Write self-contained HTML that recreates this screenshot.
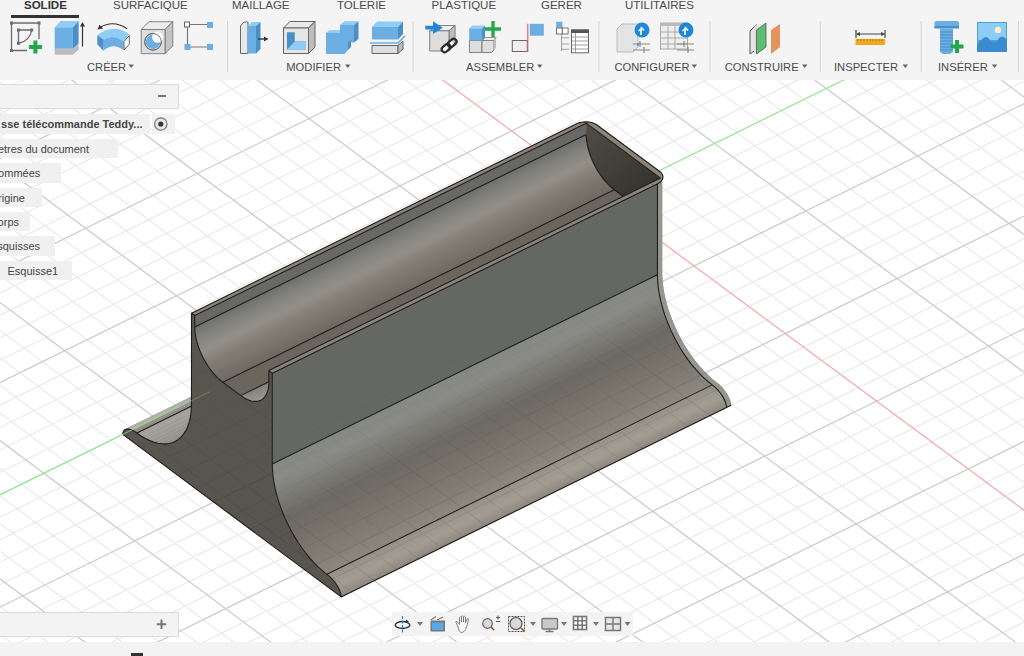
<!DOCTYPE html><html><head><meta charset="utf-8"><style>
*{margin:0;padding:0;box-sizing:border-box}
body{width:1024px;height:656px;overflow:hidden;background:#fff;font-family:"Liberation Sans", sans-serif;position:relative}
.a{position:absolute;white-space:nowrap}
.tab{font-size:11.5px;color:#4a4a4a;top:-1px;line-height:13px}
.grp{font-size:11.2px;color:#4a4a4a;top:60.5px;line-height:13px}
.it2{font-size:11px;color:#444;line-height:19px}
</style></head><body><svg class="a" style="left:0;top:0" width="1024" height="656" viewBox="0 0 1024 656"><path d="M-501.7 315.5L636.5 -243.8M-483.6 329.0L654.7 -230.4M-465.5 342.5L672.9 -216.9M-447.4 355.9L691.1 -203.5M-411.2 382.9L727.5 -176.7M-393.1 396.4L745.7 -163.2M-375.0 409.9L763.9 -149.8M-356.9 423.4L782.1 -136.4M-320.7 450.5L818.6 -109.5M-302.6 464.0L836.8 -96.0M-284.5 477.5L855.0 -82.6M-266.4 491.0L873.3 -69.1M-230.1 518.1L909.8 -42.2M-212.0 531.6L928.0 -28.8M-193.8 545.1L946.3 -15.3M-175.7 558.7L964.5 -1.8M-139.4 585.7L1001.1 25.1M-121.2 599.3L1019.3 38.6M-103.1 612.8L1037.6 52.1M-84.9 626.4L1055.9 65.5M-48.6 653.5L1092.5 92.5M-30.4 667.0L1110.8 106.0M-12.2 680.6L1129.0 119.5M6.0 694.2L1147.3 133.0M42.4 721.3L1184.0 160.0M60.5 734.9L1202.3 173.5M78.7 748.5L1220.6 187.0M97.0 762.0L1238.9 200.5M133.4 789.2L1275.5 227.6M151.6 802.8L1293.9 241.1M169.8 816.4L1312.2 254.6M188.0 830.0L1330.6 268.1M224.5 857.2L1367.2 295.2M242.7 870.8L1385.6 308.7M261.0 884.4L1403.9 322.3M279.2 898.0L1422.3 335.8M315.7 925.2L1459.0 362.9M334.0 938.8L1477.4 376.4M352.2 952.5L1495.8 390.0M370.5 966.1L1514.2 403.5M407.0 993.3L1550.9 430.7M-519.7 302.0L407.0 993.3M-497.4 291.0L429.5 982.3M-475.1 280.1L451.9 971.3M-452.8 269.1L474.3 960.2M-408.1 247.1L519.2 938.2M-385.8 236.2L541.7 927.1M-363.5 225.2L564.1 916.1M-341.1 214.2L586.5 905.0M-296.5 192.3L631.4 883.0M-274.2 181.3L653.8 871.9M-251.9 170.4L676.3 860.9M-229.5 159.4L698.7 849.9M-184.9 137.5L743.6 827.8M-162.6 126.5L766.0 816.8M-140.3 115.5L788.5 805.7M-117.9 104.6L810.9 794.7M-73.3 82.6L855.8 772.6M-51.0 71.7L878.2 761.6M-28.7 60.7L900.6 750.5M-6.4 49.7L923.0 739.5M38.3 27.8L967.9 717.4M60.6 16.8L990.3 706.4M82.9 5.9L1012.8 695.4M105.2 -5.1L1035.2 684.3M149.8 -27.0L1080.1 662.3M172.2 -38.0L1102.5 651.3M194.5 -48.9L1124.9 640.2M216.8 -59.9L1147.3 629.2M261.4 -81.8L1192.2 607.1M283.7 -92.8L1214.6 596.1M306.0 -103.8L1237.0 585.1M328.3 -114.7L1259.5 574.0M372.9 -136.6L1304.3 552.0M395.3 -147.6L1326.7 540.9M417.6 -158.6L1349.2 529.9M439.9 -169.5L1371.6 518.9M484.5 -191.4L1416.4 496.8M506.8 -202.4L1438.8 485.8M529.1 -213.4L1461.3 474.8M551.4 -224.3L1483.7 463.7M596.0 -246.2L1528.5 441.7M618.3 -257.2L1550.9 430.7" stroke="#eaeaea" stroke-width="1.2" fill="none"/><path d="M-519.7 302.0L618.3 -257.2M-429.3 369.4L709.3 -190.1M-338.8 436.9L800.4 -122.9M-248.2 504.5L891.5 -55.7M-66.7 639.9L1074.2 79.0M24.2 707.7L1165.6 146.5M115.2 775.6L1257.2 214.0M206.3 843.6L1348.9 281.7M297.5 911.6L1440.7 349.3M388.7 979.7L1532.5 417.1M-430.4 258.1L496.8 949.2M-318.8 203.3L609.0 894.0M-207.2 148.4L721.2 838.8M-95.6 93.6L833.3 783.7M16.0 38.8L945.5 728.5M127.5 -16.0L1057.6 673.3M350.6 -125.7L1281.9 563.0M462.2 -180.5L1394.0 507.9M573.7 -235.3L1506.1 452.7" stroke="#cdcdcd" stroke-width="1.3" fill="none"/><path d="M239.1 -70.9L1169.8 618.2" stroke="#f4a8a8" stroke-width="1.2" fill="none"/><path d="M-157.5 572.2L982.8 11.6" stroke="#8ee48e" stroke-width="1.1" fill="none"/><defs>
<linearGradient id="gEnd" gradientUnits="userSpaceOnUse" x1="590" y1="130" x2="640" y2="190">
<stop offset="0" stop-color="#4e4a44"/><stop offset="1" stop-color="#383530"/></linearGradient>
</defs><linearGradient id="mgE" gradientUnits="userSpaceOnUse" x1="0" y1="515.6" x2="0" y2="343.2"><stop offset="0" stop-color="#fff"/><stop offset="1" stop-color="#222"/></linearGradient><linearGradient id="mgF" gradientUnits="userSpaceOnUse" x1="569.7" y1="484.5" x2="467.7" y2="277.1"><stop offset="0" stop-color="#fff"/><stop offset="0.45" stop-color="#999"/><stop offset="0.6" stop-color="#444"/><stop offset="1" stop-color="#000"/></linearGradient><mask id="mGrid" maskUnits="userSpaceOnUse" x="0" y="0" width="1024" height="656"><path d="M191.48 313.15L191.48 404.00L191.31 409.34L190.81 414.38L189.98 419.12L188.81 423.51L187.33 427.53L185.53 431.15L183.44 434.36L181.06 437.13L178.41 439.45L175.50 441.29L172.35 442.66L168.99 443.54L165.43 443.92L161.69 443.81L157.80 443.20L153.78 442.10L149.66 440.51L145.46 438.46L141.20 435.93L136.92 432.96L136.92 432.96L134.16 431.14L131.50 429.84L129.04 429.13L126.90 429.02L125.13 429.53L123.82 430.63L123.01 432.28L122.74 434.42L341.16 596.90L340.89 594.36L340.08 591.50L338.77 588.45L337.00 585.31L334.85 582.21L332.39 579.27L329.72 576.61L326.95 574.31L326.95 574.31L322.66 570.91L318.40 567.09L314.19 562.90L310.06 558.34L306.03 553.46L302.13 548.27L298.39 542.81L294.82 537.13L291.45 531.24L288.30 525.18L285.39 519.01L282.73 512.74L280.35 506.43L278.25 500.10L276.46 493.80L274.97 487.57L273.81 481.45L272.97 475.47L272.47 469.67L272.30 464.08L272.30 373.18L268.84 370.61L268.84 381.92L268.75 384.57L268.49 387.07L268.06 389.41L267.47 391.58L266.70 393.56L265.78 395.33L264.71 396.90L263.48 398.25L262.12 399.36L260.63 400.24L259.01 400.88L257.28 401.28L255.45 401.42L253.53 401.32L251.53 400.97L249.46 400.37L247.35 399.54L245.19 398.46L243.00 397.15L240.80 395.63L222.78 382.23L220.58 380.49L218.40 378.55L216.24 376.42L214.12 374.11L212.06 371.64L210.06 369.02L208.14 366.26L206.31 363.40L204.58 360.44L202.96 357.40L201.47 354.30L200.11 351.15L198.89 347.99L197.81 344.83L196.89 341.68L196.13 338.57L195.53 335.52L195.10 332.54L194.84 329.66L194.76 326.89L194.76 326.89L194.76 315.58Z" fill="url(#mgE)"/><path d="M272.30 373.18L272.30 464.08L272.47 469.67L272.97 475.47L273.81 481.45L274.97 487.57L276.46 493.80L278.25 500.10L280.35 506.43L282.73 512.74L285.39 519.01L288.30 525.18L291.45 531.24L294.82 537.13L298.39 542.81L302.13 548.27L306.03 553.46L310.06 558.34L314.19 562.90L318.40 567.09L322.66 570.91L326.95 574.31L326.95 574.31L329.72 576.61L332.39 579.27L334.85 582.21L337.00 585.31L338.77 588.45L340.08 591.50L340.89 594.36L341.16 596.90L731.17 405.14L730.90 402.59L730.09 399.74L728.77 396.68L727.00 393.55L724.84 390.46L722.38 387.52L719.71 384.86L716.93 382.57L716.93 382.57L712.63 379.17L708.36 375.36L704.14 371.17L700.00 366.62L695.96 361.74L692.06 356.56L688.31 351.11L684.73 345.42L681.35 339.54L678.20 333.49L675.28 327.32L672.62 321.06L670.23 314.75L668.13 308.42L666.33 302.13L664.84 295.90L663.67 289.78L662.83 283.80L662.33 278.01L662.16 272.42L662.16 181.54Z" fill="url(#mgF)"/><path d="M657.46 183.85L657.46 274.73L657.63 280.32L658.13 286.11L658.97 292.09L660.14 298.21L661.63 304.44L663.43 310.73L665.53 317.06L667.92 323.37L670.58 329.63L673.50 335.80L676.65 341.85L680.03 347.73L683.61 353.42L687.36 358.87L691.26 364.05L695.30 368.93L699.44 373.48L703.66 377.67L707.93 381.48L712.23 384.88L712.23 384.88L715.01 387.17L717.68 389.83L720.14 392.77L722.30 395.86L724.07 399.00L725.39 402.05L726.20 404.90L726.47 407.45L731.17 405.14L730.90 402.59L730.09 399.74L728.77 396.68L727.00 393.55L724.84 390.46L722.38 387.52L719.71 384.86L716.93 382.57L716.93 382.57L712.63 379.17L708.36 375.36L704.14 371.17L700.00 366.62L695.96 361.74L692.06 356.56L688.31 351.11L684.73 345.42L681.35 339.54L678.20 333.49L675.28 327.32L672.62 321.06L670.23 314.75L668.13 308.42L666.33 302.13L664.84 295.90L663.67 289.78L662.83 283.80L662.33 278.01L662.16 272.42L662.16 181.54Z" fill="url(#mgF)"/></mask><clipPath id="cpL"><rect x="0" y="0" width="191.6" height="656"/></clipPath><clipPath id="cpM"><path d="M191.48 313.15L576.69 123.80L579.05 122.86L581.67 122.21L584.44 121.89L587.27 121.89L590.04 122.23L592.65 122.89L595.00 123.84L596.99 125.05L659.75 171.48L661.31 172.91L662.39 174.49L662.93 176.16L662.92 177.87L662.36 179.54L661.27 181.12L659.69 182.53L657.68 183.74L272.30 373.18ZM191.48 313.15L191.48 404.00L191.31 409.34L190.81 414.38L189.98 419.12L188.81 423.51L187.33 427.53L185.53 431.15L183.44 434.36L181.06 437.13L178.41 439.45L175.50 441.29L172.35 442.66L168.99 443.54L165.43 443.92L161.69 443.81L157.80 443.20L153.78 442.10L149.66 440.51L145.46 438.46L141.20 435.93L136.92 432.96L136.92 432.96L134.16 431.14L131.50 429.84L129.04 429.13L126.90 429.02L125.13 429.53L123.82 430.63L123.01 432.28L122.74 434.42L341.16 596.90L340.89 594.36L340.08 591.50L338.77 588.45L337.00 585.31L334.85 582.21L332.39 579.27L329.72 576.61L326.95 574.31L326.95 574.31L322.66 570.91L318.40 567.09L314.19 562.90L310.06 558.34L306.03 553.46L302.13 548.27L298.39 542.81L294.82 537.13L291.45 531.24L288.30 525.18L285.39 519.01L282.73 512.74L280.35 506.43L278.25 500.10L276.46 493.80L274.97 487.57L273.81 481.45L272.97 475.47L272.47 469.67L272.30 464.08L272.30 373.18L268.84 370.61L268.84 381.92L268.75 384.57L268.49 387.07L268.06 389.41L267.47 391.58L266.70 393.56L265.78 395.33L264.71 396.90L263.48 398.25L262.12 399.36L260.63 400.24L259.01 400.88L257.28 401.28L255.45 401.42L253.53 401.32L251.53 400.97L249.46 400.37L247.35 399.54L245.19 398.46L243.00 397.15L240.80 395.63L222.78 382.23L220.58 380.49L218.40 378.55L216.24 376.42L214.12 374.11L212.06 371.64L210.06 369.02L208.14 366.26L206.31 363.40L204.58 360.44L202.96 357.40L201.47 354.30L200.11 351.15L198.89 347.99L197.81 344.83L196.89 341.68L196.13 338.57L195.53 335.52L195.10 332.54L194.84 329.66L194.76 326.89L194.76 326.89L194.76 315.58ZM272.30 373.18L272.30 464.08L272.30 464.08L272.47 469.67L272.97 475.47L273.81 481.45L274.97 487.57L276.46 493.80L278.25 500.10L280.35 506.43L282.73 512.74L285.39 519.01L288.30 525.18L291.45 531.24L294.82 537.13L298.39 542.81L302.13 548.27L306.03 553.46L310.06 558.34L314.19 562.90L318.40 567.09L322.66 570.91L326.95 574.31L326.95 574.31L329.72 576.61L332.39 579.27L334.85 582.21L337.00 585.31L338.77 588.45L340.08 591.50L340.89 594.36L341.16 596.90L731.17 405.14L730.90 402.59L730.09 399.74L728.77 396.68L727.00 393.55L724.84 390.46L722.38 387.52L719.71 384.86L716.93 382.57L716.93 382.57L712.63 379.17L708.36 375.36L704.14 371.17L700.00 366.62L695.96 361.74L692.06 356.56L688.31 351.11L684.73 345.42L681.35 339.54L678.20 333.49L675.28 327.32L672.62 321.06L670.23 314.75L668.13 308.42L666.33 302.13L664.84 295.90L663.67 289.78L662.83 283.80L662.33 278.01L662.16 272.42L662.16 272.42L662.16 181.54Z"/></clipPath><g clip-path="url(#cpL)"><path d="M136.92 432.96L134.16 431.14L530.42 236.34L533.20 238.17Z" fill="#8f8b83" stroke="#8f8b83" stroke-width="0.5"/><path d="M134.16 431.14L131.50 429.84L527.76 235.05L530.42 236.34Z" fill="#949189" stroke="#949189" stroke-width="0.5"/><path d="M131.50 429.84L129.04 429.13L525.30 234.34L527.76 235.05Z" fill="#9a978f" stroke="#9a978f" stroke-width="0.5"/><path d="M129.04 429.13L126.90 429.02L523.15 234.24L525.30 234.34Z" fill="#a09d95" stroke="#a09d95" stroke-width="0.5"/><path d="M126.90 429.02L125.13 429.53L521.38 234.74L523.15 234.24Z" fill="#a5a29c" stroke="#a5a29c" stroke-width="0.5"/><path d="M125.13 429.53L123.82 430.63L520.07 235.85L521.38 234.74Z" fill="#aba8a2" stroke="#aba8a2" stroke-width="0.5"/><path d="M123.82 430.63L123.01 432.28L519.26 237.50L520.07 235.85Z" fill="#b1aea8" stroke="#b1aea8" stroke-width="0.5"/><path d="M123.01 432.28L122.74 434.42L518.99 239.64L519.26 237.50Z" fill="#b6b4ae" stroke="#b6b4ae" stroke-width="0.5"/><path d="M191.48 404.00L191.31 409.34L587.71 214.48L587.88 209.15Z" fill="#6a6862" stroke="#6a6862" stroke-width="0.5"/><path d="M191.31 409.34L190.81 414.38L587.20 219.53L587.71 214.48Z" fill="#6e6b65" stroke="#6e6b65" stroke-width="0.5"/><path d="M190.81 414.38L189.98 419.12L586.37 224.26L587.20 219.53Z" fill="#706e68" stroke="#706e68" stroke-width="0.5"/><path d="M189.98 419.12L188.81 423.51L585.20 228.65L586.37 224.26Z" fill="#74716b" stroke="#74716b" stroke-width="0.5"/><path d="M188.81 423.51L187.33 427.53L583.71 232.67L585.20 228.65Z" fill="#76746e" stroke="#76746e" stroke-width="0.5"/><path d="M187.33 427.53L185.53 431.15L581.92 236.30L583.71 232.67Z" fill="#7a7771" stroke="#7a7771" stroke-width="0.5"/><path d="M185.53 431.15L183.44 434.36L579.82 239.51L581.92 236.30Z" fill="#7c7a74" stroke="#7c7a74" stroke-width="0.5"/><path d="M183.44 434.36L181.06 437.13L577.43 242.28L579.82 239.51Z" fill="#807d77" stroke="#807d77" stroke-width="0.5"/><path d="M181.06 437.13L178.41 439.45L574.77 244.60L577.43 242.28Z" fill="#82807a" stroke="#82807a" stroke-width="0.5"/><path d="M178.41 439.45L175.50 441.29L571.86 246.45L574.77 244.60Z" fill="#86837d" stroke="#86837d" stroke-width="0.5"/><path d="M175.50 441.29L172.35 442.66L568.71 247.82L571.86 246.45Z" fill="#888680" stroke="#888680" stroke-width="0.5"/><path d="M172.35 442.66L168.99 443.54L565.33 248.70L568.71 247.82Z" fill="#8c8983" stroke="#8c8983" stroke-width="0.5"/><path d="M168.99 443.54L165.43 443.92L561.76 249.09L565.33 248.70Z" fill="#8e8c86" stroke="#8e8c86" stroke-width="0.5"/><path d="M165.43 443.92L161.69 443.81L558.02 248.98L561.76 249.09Z" fill="#928f89" stroke="#928f89" stroke-width="0.5"/><path d="M161.69 443.81L157.80 443.20L554.12 248.37L558.02 248.98Z" fill="#94928c" stroke="#94928c" stroke-width="0.5"/><path d="M157.80 443.20L153.78 442.10L550.09 247.28L554.12 248.37Z" fill="#98958f" stroke="#98958f" stroke-width="0.5"/><path d="M153.78 442.10L149.66 440.51L545.96 245.70L550.09 247.28Z" fill="#9a9892" stroke="#9a9892" stroke-width="0.5"/><path d="M149.66 440.51L145.46 438.46L541.75 243.65L545.96 245.70Z" fill="#9e9b95" stroke="#9e9b95" stroke-width="0.5"/><path d="M145.46 438.46L141.20 435.93L537.49 241.13L541.75 243.65Z" fill="#a09e98" stroke="#a09e98" stroke-width="0.5"/><path d="M141.20 435.93L136.92 432.96L533.20 238.17L537.49 241.13Z" fill="#a4a19b" stroke="#a4a19b" stroke-width="0.5"/></g><path d="M191.48 313.15L576.69 123.80L579.05 122.86L581.67 122.21L584.44 121.89L587.27 121.89L590.04 122.23L592.65 122.89L595.00 123.84L596.99 125.05L659.75 171.48L661.31 172.91L662.39 174.49L662.93 176.16L662.92 177.87L662.36 179.54L661.27 181.12L659.69 182.53L657.68 183.74L272.30 373.18Z" fill="#8b8477"/><path d="M194.76 315.58L586.24 123.15L586.24 134.46L194.76 326.89Z" fill="#686965" stroke="#686965" stroke-width="0.6"/><linearGradient id="sg1" gradientUnits="userSpaceOnUse" x1="387.37" y1="232.21" x2="414.74" y2="287.88"><stop offset="0.0000" stop-color="#6a6c68"/><stop offset="0.0000" stop-color="#6e706c"/><stop offset="0.0407" stop-color="#737470"/><stop offset="0.0843" stop-color="#777874"/><stop offset="0.1304" stop-color="#7c7c78"/><stop offset="0.1788" stop-color="#80807c"/><stop offset="0.2292" stop-color="#85847f"/><stop offset="0.2813" stop-color="#898882"/><stop offset="0.3347" stop-color="#8d8b84"/><stop offset="0.3891" stop-color="#918e87"/><stop offset="0.4443" stop-color="#918d85"/><stop offset="0.4997" stop-color="#8c8880"/><stop offset="0.5552" stop-color="#87837b"/><stop offset="0.6104" stop-color="#837e76"/><stop offset="0.6648" stop-color="#7f7a72"/><stop offset="0.7183" stop-color="#7d7870"/><stop offset="0.7704" stop-color="#7a756d"/><stop offset="0.8209" stop-color="#78726a"/><stop offset="0.8693" stop-color="#757068"/><stop offset="0.9155" stop-color="#736d65"/><stop offset="0.9592" stop-color="#706b63"/><stop offset="1.0000" stop-color="#6e6860"/></linearGradient><path d="M194.76 326.89L194.76 326.89L194.84 329.66L195.10 332.54L195.53 335.52L196.13 338.57L196.89 341.68L197.81 344.83L198.89 347.99L200.11 351.15L201.47 354.30L202.96 357.40L204.58 360.44L206.31 363.40L208.14 366.26L210.06 369.02L212.06 371.64L214.12 374.11L216.24 376.42L218.40 378.55L220.58 380.49L222.78 382.23L614.32 189.76L612.12 188.03L609.93 186.09L607.77 183.96L605.64 181.65L603.57 179.18L601.57 176.56L599.65 173.81L597.81 170.95L596.08 167.99L594.46 164.95L592.97 161.86L591.60 158.72L590.38 155.56L589.30 152.39L588.38 149.25L587.61 146.14L587.01 143.09L586.58 140.11L586.33 137.23L586.24 134.46L586.24 134.46Z" fill="url(#sg1)"/><path d="M222.78 382.23L240.80 395.63L632.38 203.13L614.32 189.76Z" fill="#6a655d"/><linearGradient id="sg2" gradientUnits="userSpaceOnUse" x1="450.72" y1="292.44" x2="456.40" y2="304.00"><stop offset="0.0000" stop-color="#807c74"/><stop offset="0.0057" stop-color="#8c8a84"/><stop offset="0.1817" stop-color="#837f77"/><stop offset="0.1869" stop-color="#8f8d87"/><stop offset="0.3474" stop-color="#86827a"/><stop offset="0.3522" stop-color="#92908a"/><stop offset="0.4962" stop-color="#89867e"/><stop offset="0.5004" stop-color="#95938d"/><stop offset="0.6271" stop-color="#8c8981"/><stop offset="0.6308" stop-color="#989690"/><stop offset="0.7393" stop-color="#8f8c84"/><stop offset="0.7424" stop-color="#9c9992"/><stop offset="0.8321" stop-color="#928f88"/><stop offset="0.8346" stop-color="#9f9c95"/><stop offset="0.9050" stop-color="#96928b"/><stop offset="0.9069" stop-color="#a29f98"/><stop offset="0.9574" stop-color="#99958e"/><stop offset="0.9587" stop-color="#a5a29b"/><stop offset="0.9892" stop-color="#9c9891"/><stop offset="0.9898" stop-color="#a29f98"/><stop offset="1.0000" stop-color="#9f9c94"/></linearGradient><path d="M240.80 395.63L243.00 397.15L245.19 398.46L247.35 399.54L249.46 400.37L251.53 400.97L253.53 401.32L255.45 401.42L257.28 401.28L259.01 400.88L260.63 400.24L262.12 399.36L263.48 398.25L264.71 396.90L265.78 395.33L266.70 393.56L267.47 391.58L268.06 389.41L268.49 387.07L268.75 384.57L268.84 381.92L660.48 189.40L660.39 192.05L660.14 194.55L659.70 196.89L659.11 199.05L658.34 201.03L657.42 202.81L656.34 204.38L655.11 205.73L653.75 206.84L652.25 207.73L650.63 208.37L648.90 208.76L647.06 208.91L645.14 208.81L643.13 208.46L641.06 207.87L638.94 207.03L636.78 205.96L634.59 204.66L632.38 203.13Z" fill="url(#sg2)"/><path d="M586.24 123.15L586.24 134.46L586.24 134.46L586.33 137.23L586.58 140.11L587.01 143.09L587.61 146.14L588.38 149.25L589.30 152.39L590.38 155.56L591.60 158.72L592.97 161.86L594.46 164.95L596.08 167.99L597.81 170.95L599.65 173.81L601.57 176.56L603.57 179.18L605.64 181.65L607.77 183.96L609.93 186.09L612.12 188.03L614.32 189.76L632.38 203.13L634.59 204.66L636.78 205.96L638.94 207.03L641.06 207.87L643.13 208.46L645.14 208.81L647.06 208.91L648.90 208.76L650.63 208.37L652.25 207.73L653.75 206.84L655.11 205.73L656.34 204.38L657.42 202.81L658.34 201.03L659.11 199.05L659.70 196.89L660.14 194.55L660.39 192.05L660.48 189.40L660.48 178.09Z" fill="url(#gEnd)"/><path d="M194.76 326.89L586.24 134.46M222.78 382.23L614.32 189.76M240.80 395.63L632.38 203.13M586.24 134.46L586.24 134.46L586.33 137.23L586.58 140.11L587.01 143.09L587.61 146.14L588.38 149.25L589.30 152.39L590.38 155.56L591.60 158.72L592.97 161.86L594.46 164.95L596.08 167.99L597.81 170.95L599.65 173.81L601.57 176.56L603.57 179.18L605.64 181.65L607.77 183.96L609.93 186.09L612.12 188.03L614.32 189.76L632.38 203.13L634.59 204.66L636.78 205.96L638.94 207.03L641.06 207.87L643.13 208.46L645.14 208.81L647.06 208.91L648.90 208.76L650.63 208.37L652.25 207.73L653.75 206.84L655.11 205.73L656.34 204.38L657.42 202.81L658.34 201.03L659.11 199.05L659.70 196.89L660.14 194.55L660.39 192.05L660.48 189.40L660.48 178.09" stroke="#1e1e1e" stroke-width="1.1" fill="none" stroke-linejoin="round"/><path d="M191.48 313.15L576.69 123.80L579.05 122.86L581.67 122.21L584.44 121.89L587.27 121.89L590.04 122.23L592.65 122.89L595.00 123.84L596.99 125.05L659.75 171.48L661.31 172.91L662.39 174.49L662.93 176.16L662.92 177.87L662.36 179.54L661.27 181.12L659.69 182.53L657.68 183.74L272.30 373.18ZM194.76 315.58L586.24 123.15L660.48 178.09L268.84 370.61Z" fill="#8b8477" fill-rule="evenodd"/><path d="M191.48 313.15L191.48 404.00L191.31 409.34L190.81 414.38L189.98 419.12L188.81 423.51L187.33 427.53L185.53 431.15L183.44 434.36L181.06 437.13L178.41 439.45L175.50 441.29L172.35 442.66L168.99 443.54L165.43 443.92L161.69 443.81L157.80 443.20L153.78 442.10L149.66 440.51L145.46 438.46L141.20 435.93L136.92 432.96L136.92 432.96L134.16 431.14L131.50 429.84L129.04 429.13L126.90 429.02L125.13 429.53L123.82 430.63L123.01 432.28L122.74 434.42L341.16 596.90L340.89 594.36L340.08 591.50L338.77 588.45L337.00 585.31L334.85 582.21L332.39 579.27L329.72 576.61L326.95 574.31L326.95 574.31L322.66 570.91L318.40 567.09L314.19 562.90L310.06 558.34L306.03 553.46L302.13 548.27L298.39 542.81L294.82 537.13L291.45 531.24L288.30 525.18L285.39 519.01L282.73 512.74L280.35 506.43L278.25 500.10L276.46 493.80L274.97 487.57L273.81 481.45L272.97 475.47L272.47 469.67L272.30 464.08L272.30 373.18L268.84 370.61L268.84 381.92L268.75 384.57L268.49 387.07L268.06 389.41L267.47 391.58L266.70 393.56L265.78 395.33L264.71 396.90L263.48 398.25L262.12 399.36L260.63 400.24L259.01 400.88L257.28 401.28L255.45 401.42L253.53 401.32L251.53 400.97L249.46 400.37L247.35 399.54L245.19 398.46L243.00 397.15L240.80 395.63L222.78 382.23L220.58 380.49L218.40 378.55L216.24 376.42L214.12 374.11L212.06 371.64L210.06 369.02L208.14 366.26L206.31 363.40L204.58 360.44L202.96 357.40L201.47 354.30L200.11 351.15L198.89 347.99L197.81 344.83L196.89 341.68L196.13 338.57L195.53 335.52L195.10 332.54L194.84 329.66L194.76 326.89L194.76 326.89L194.76 315.58Z" fill="#58544e"/><path d="M272.30 373.18L662.16 181.54L662.16 272.42L272.30 464.08Z" fill="#656763"/><linearGradient id="sg3" gradientUnits="userSpaceOnUse" x1="460.26" y1="371.68" x2="514.53" y2="482.08"><stop offset="0.0000" stop-color="#868884"/><stop offset="0.0413" stop-color="#878985"/><stop offset="0.0855" stop-color="#898a86"/><stop offset="0.1321" stop-color="#8a8b87"/><stop offset="0.1809" stop-color="#858581"/><stop offset="0.2317" stop-color="#80807b"/><stop offset="0.2841" stop-color="#7b7a74"/><stop offset="0.3377" stop-color="#76746e"/><stop offset="0.3923" stop-color="#716f68"/><stop offset="0.4476" stop-color="#6c6962"/><stop offset="0.5031" stop-color="#6f6c64"/><stop offset="0.5585" stop-color="#726e67"/><stop offset="0.6135" stop-color="#757169"/><stop offset="0.6678" stop-color="#78746b"/><stop offset="0.7211" stop-color="#7b766e"/><stop offset="0.7729" stop-color="#7e7970"/><stop offset="0.8229" stop-color="#817c73"/><stop offset="0.8710" stop-color="#847f76"/><stop offset="0.9167" stop-color="#888379"/><stop offset="0.9598" stop-color="#8b867c"/><stop offset="1.0000" stop-color="#8e897f"/></linearGradient><path d="M272.30 464.08L272.47 469.67L272.97 475.47L273.81 481.45L274.97 487.57L276.46 493.80L278.25 500.10L280.35 506.43L282.73 512.74L285.39 519.01L288.30 525.18L291.45 531.24L294.82 537.13L298.39 542.81L302.13 548.27L306.03 553.46L310.06 558.34L314.19 562.90L318.40 567.09L322.66 570.91L326.95 574.31L716.93 382.57L712.63 379.17L708.36 375.36L704.14 371.17L700.00 366.62L695.96 361.74L692.06 356.56L688.31 351.11L684.73 345.42L681.35 339.54L678.20 333.49L675.28 327.32L672.62 321.06L670.23 314.75L668.13 308.42L666.33 302.13L664.84 295.90L663.67 289.78L662.83 283.80L662.33 278.01L662.16 272.42Z" fill="url(#sg3)"/><linearGradient id="sg4" gradientUnits="userSpaceOnUse" x1="524.65" y1="477.10" x2="536.37" y2="500.92"><stop offset="0.0000" stop-color="#969187"/><stop offset="0.1236" stop-color="#99948a"/><stop offset="0.2581" stop-color="#9c978d"/><stop offset="0.3983" stop-color="#9f9a90"/><stop offset="0.5388" stop-color="#a29d93"/><stop offset="0.6742" stop-color="#9c988e"/><stop offset="0.7993" stop-color="#979288"/><stop offset="0.9093" stop-color="#928c83"/><stop offset="1.0000" stop-color="#8c877e"/></linearGradient><path d="M326.95 574.31L329.72 576.61L332.39 579.27L334.85 582.21L337.00 585.31L338.77 588.45L340.08 591.50L340.89 594.36L341.16 596.90L731.17 405.14L730.90 402.59L730.09 399.74L728.77 396.68L727.00 393.55L724.84 390.46L722.38 387.52L719.71 384.86L716.93 382.57Z" fill="url(#sg4)"/><path d="M657.46 183.85L657.46 274.73L657.63 280.32L658.13 286.11L658.97 292.09L660.14 298.21L661.63 304.44L663.43 310.73L665.53 317.06L667.92 323.37L670.58 329.63L673.50 335.80L676.65 341.85L680.03 347.73L683.61 353.42L687.36 358.87L691.26 364.05L695.30 368.93L699.44 373.48L703.66 377.67L707.93 381.48L712.23 384.88L712.23 384.88L715.01 387.17L717.68 389.83L720.14 392.77L722.30 395.86L724.07 399.00L725.39 402.05L726.20 404.90L726.47 407.45L731.17 405.14L730.90 402.59L730.09 399.74L728.77 396.68L727.00 393.55L724.84 390.46L722.38 387.52L719.71 384.86L716.93 382.57L716.93 382.57L712.63 379.17L708.36 375.36L704.14 371.17L700.00 366.62L695.96 361.74L692.06 356.56L688.31 351.11L684.73 345.42L681.35 339.54L678.20 333.49L675.28 327.32L672.62 321.06L670.23 314.75L668.13 308.42L666.33 302.13L664.84 295.90L663.67 289.78L662.83 283.80L662.33 278.01L662.16 272.42L662.16 181.54Z" fill="#969691"/><path d="M191.48 313.15L191.48 404.00L191.31 409.34L190.81 414.38L189.98 419.12L188.81 423.51L187.33 427.53L185.53 431.15L183.44 434.36L181.06 437.13L178.41 439.45L175.50 441.29L172.35 442.66L168.99 443.54L165.43 443.92L161.69 443.81L157.80 443.20L153.78 442.10L149.66 440.51L145.46 438.46L141.20 435.93L136.92 432.96L136.92 432.96L134.16 431.14L131.50 429.84L129.04 429.13L126.90 429.02L125.13 429.53L123.82 430.63L123.01 432.28L122.74 434.42L341.16 596.90L340.89 594.36L340.08 591.50L338.77 588.45L337.00 585.31L334.85 582.21L332.39 579.27L329.72 576.61L326.95 574.31L326.95 574.31L322.66 570.91L318.40 567.09L314.19 562.90L310.06 558.34L306.03 553.46L302.13 548.27L298.39 542.81L294.82 537.13L291.45 531.24L288.30 525.18L285.39 519.01L282.73 512.74L280.35 506.43L278.25 500.10L276.46 493.80L274.97 487.57L273.81 481.45L272.97 475.47L272.47 469.67L272.30 464.08L272.30 373.18L268.84 370.61L268.84 381.92L268.75 384.57L268.49 387.07L268.06 389.41L267.47 391.58L266.70 393.56L265.78 395.33L264.71 396.90L263.48 398.25L262.12 399.36L260.63 400.24L259.01 400.88L257.28 401.28L255.45 401.42L253.53 401.32L251.53 400.97L249.46 400.37L247.35 399.54L245.19 398.46L243.00 397.15L240.80 395.63L222.78 382.23L220.58 380.49L218.40 378.55L216.24 376.42L214.12 374.11L212.06 371.64L210.06 369.02L208.14 366.26L206.31 363.40L204.58 360.44L202.96 357.40L201.47 354.30L200.11 351.15L198.89 347.99L197.81 344.83L196.89 341.68L196.13 338.57L195.53 335.52L195.10 332.54L194.84 329.66L194.76 326.89L194.76 326.89L194.76 315.58ZM191.48 313.15L576.69 123.80L579.05 122.86L581.67 122.21L584.44 121.89L587.27 121.89L590.04 122.23L592.65 122.89L595.00 123.84L596.99 125.05L659.75 171.48L661.31 172.91L662.39 174.49L662.93 176.16L662.92 177.87L662.36 179.54L661.27 181.12L659.69 182.53L657.68 183.74L272.30 373.18M194.76 315.58L586.24 123.15L660.48 178.09L268.84 370.61M272.30 464.08L657.46 274.73M326.95 574.31L712.23 384.88M657.46 183.85L657.46 274.73L657.63 280.32L658.13 286.11L658.97 292.09L660.14 298.21L661.63 304.44L663.43 310.73L665.53 317.06L667.92 323.37L670.58 329.63L673.50 335.80L676.65 341.85L680.03 347.73L683.61 353.42L687.36 358.87L691.26 364.05L695.30 368.93L699.44 373.48L703.66 377.67L707.93 381.48L712.23 384.88L712.23 384.88L715.01 387.17L717.68 389.83L720.14 392.77L722.30 395.86L724.07 399.00L725.39 402.05L726.20 404.90L726.47 407.45M731.17 405.14L341.16 596.90" stroke="#1e1e1e" stroke-width="1.1" fill="none" stroke-linejoin="round"/><g clip-path="url(#cpL)"><path d="M136.92 432.96L533.20 238.17" stroke="#1e1e1e" stroke-width="1.1" fill="none"/></g><g opacity="0.08" mask="url(#mGrid)"><path d="M-501.7 315.5L636.5 -243.8M-483.6 329.0L654.7 -230.4M-465.5 342.5L672.9 -216.9M-447.4 355.9L691.1 -203.5M-411.2 382.9L727.5 -176.7M-393.1 396.4L745.7 -163.2M-375.0 409.9L763.9 -149.8M-356.9 423.4L782.1 -136.4M-320.7 450.5L818.6 -109.5M-302.6 464.0L836.8 -96.0M-284.5 477.5L855.0 -82.6M-266.4 491.0L873.3 -69.1M-230.1 518.1L909.8 -42.2M-212.0 531.6L928.0 -28.8M-193.8 545.1L946.3 -15.3M-175.7 558.7L964.5 -1.8M-139.4 585.7L1001.1 25.1M-121.2 599.3L1019.3 38.6M-103.1 612.8L1037.6 52.1M-84.9 626.4L1055.9 65.5M-48.6 653.5L1092.5 92.5M-30.4 667.0L1110.8 106.0M-12.2 680.6L1129.0 119.5M6.0 694.2L1147.3 133.0M42.4 721.3L1184.0 160.0M60.5 734.9L1202.3 173.5M78.7 748.5L1220.6 187.0M97.0 762.0L1238.9 200.5M133.4 789.2L1275.5 227.6M151.6 802.8L1293.9 241.1M169.8 816.4L1312.2 254.6M188.0 830.0L1330.6 268.1M224.5 857.2L1367.2 295.2M242.7 870.8L1385.6 308.7M261.0 884.4L1403.9 322.3M279.2 898.0L1422.3 335.8M315.7 925.2L1459.0 362.9M334.0 938.8L1477.4 376.4M352.2 952.5L1495.8 390.0M370.5 966.1L1514.2 403.5M407.0 993.3L1550.9 430.7M-519.7 302.0L407.0 993.3M-497.4 291.0L429.5 982.3M-475.1 280.1L451.9 971.3M-452.8 269.1L474.3 960.2M-408.1 247.1L519.2 938.2M-385.8 236.2L541.7 927.1M-363.5 225.2L564.1 916.1M-341.1 214.2L586.5 905.0M-296.5 192.3L631.4 883.0M-274.2 181.3L653.8 871.9M-251.9 170.4L676.3 860.9M-229.5 159.4L698.7 849.9M-184.9 137.5L743.6 827.8M-162.6 126.5L766.0 816.8M-140.3 115.5L788.5 805.7M-117.9 104.6L810.9 794.7M-73.3 82.6L855.8 772.6M-51.0 71.7L878.2 761.6M-28.7 60.7L900.6 750.5M-6.4 49.7L923.0 739.5M38.3 27.8L967.9 717.4M60.6 16.8L990.3 706.4M82.9 5.9L1012.8 695.4M105.2 -5.1L1035.2 684.3M149.8 -27.0L1080.1 662.3M172.2 -38.0L1102.5 651.3M194.5 -48.9L1124.9 640.2M216.8 -59.9L1147.3 629.2M261.4 -81.8L1192.2 607.1M283.7 -92.8L1214.6 596.1M306.0 -103.8L1237.0 585.1M328.3 -114.7L1259.5 574.0M372.9 -136.6L1304.3 552.0M395.3 -147.6L1326.7 540.9M417.6 -158.6L1349.2 529.9M439.9 -169.5L1371.6 518.9M484.5 -191.4L1416.4 496.8M506.8 -202.4L1438.8 485.8M529.1 -213.4L1461.3 474.8M551.4 -224.3L1483.7 463.7M596.0 -246.2L1528.5 441.7M618.3 -257.2L1550.9 430.7" stroke="#000" stroke-width="1" fill="none"/><path d="M-519.7 302.0L618.3 -257.2M-429.3 369.4L709.3 -190.1M-338.8 436.9L800.4 -122.9M-248.2 504.5L891.5 -55.7M-66.7 639.9L1074.2 79.0M24.2 707.7L1165.6 146.5M115.2 775.6L1257.2 214.0M206.3 843.6L1348.9 281.7M297.5 911.6L1440.7 349.3M388.7 979.7L1532.5 417.1M-430.4 258.1L496.8 949.2M-318.8 203.3L609.0 894.0M-207.2 148.4L721.2 838.8M-95.6 93.6L833.3 783.7M16.0 38.8L945.5 728.5M127.5 -16.0L1057.6 673.3M350.6 -125.7L1281.9 563.0M462.2 -180.5L1394.0 507.9M573.7 -235.3L1506.1 452.7" stroke="#000" stroke-width="1.2" fill="none"/></g><path d="M-157.5 572.2L124.3 433.6" stroke="#8ee48e" stroke-width="1" fill="none" opacity="0.9"/><path d="M124.3 433.6L180.2 406.2" stroke="#8ee48e" stroke-width="1" fill="none" opacity="0.75"/><path d="M180.2 406.2L209.3 391.9" stroke="#8ee48e" stroke-width="1" fill="none" opacity="0.35"/></svg><div class="a" style="left:0;top:0;width:1024px;height:80px;background:#f4f4f4"></div><div class="a tab" style="left:24px;font-weight:bold;color:#333">SOLIDE</div><div class="a tab" style="left:113px;font-weight:normal;">SURFACIQUE</div><div class="a tab" style="left:232px;font-weight:normal;">MAILLAGE</div><div class="a tab" style="left:337px;font-weight:normal;">TOLERIE</div><div class="a tab" style="left:431.5px;font-weight:normal;">PLASTIQUE</div><div class="a tab" style="left:541px;font-weight:normal;">GERER</div><div class="a tab" style="left:625px;font-weight:normal;">UTILITAIRES</div><div class="a" style="left:11px;top:15px;width:67.5px;height:2.7px;background:#333"></div><div class="a grp" style="left:87px">CRÉER</div><div class="a grp" style="left:286.3px">MODIFIER</div><div class="a grp" style="left:466px">ASSEMBLER</div><div class="a grp" style="left:614.4px">CONFIGURER</div><div class="a grp" style="left:724.7px">CONSTRUIRE</div><div class="a grp" style="left:834px">INSPECTER</div><div class="a grp" style="left:938px">INSÉRER</div><svg class="a" style="left:0;top:0" width="1024" height="80"><path d="M128.4 64.5h5.5l-2.75 3.5z" fill="#666"/><path d="M345 64.5h5.5l-2.75 3.5z" fill="#666"/><path d="M537 64.5h5.5l-2.75 3.5z" fill="#666"/><path d="M691.6 64.5h5.5l-2.75 3.5z" fill="#666"/><path d="M802 64.5h5.5l-2.75 3.5z" fill="#666"/><path d="M902.5 64.5h5.5l-2.75 3.5z" fill="#666"/><path d="M991.8 64.5h5.5l-2.75 3.5z" fill="#666"/><rect x="227" y="21" width="1" height="51" fill="#d4d4d4"/><rect x="412.5" y="21" width="1" height="51" fill="#d4d4d4"/><rect x="598.5" y="21" width="1" height="51" fill="#d4d4d4"/><rect x="709.5" y="21" width="1" height="51" fill="#d4d4d4"/><rect x="819.8" y="21" width="1" height="51" fill="#d4d4d4"/><rect x="920.6" y="21" width="1" height="51" fill="#d4d4d4"/><rect x="1018" y="21" width="1" height="51" fill="#d4d4d4"/><g transform="translate(10,22)" fill="none" stroke="#6b6b6b" stroke-width="1.3">
<path d="M1.5 1 H29 M1.5 1 V28.5 M29 1 V17 M1.5 28.5 H17"/>
<path d="M8.5 8 H21.7 M8.5 8 V21.3 M21.7 8 Q20 19 8.5 21.3"/>
<g fill="#6b6b6b" stroke="none"><rect x="0" y="-0.5" width="3" height="3"/><rect x="27.5" y="-0.5" width="3" height="3"/><rect x="0" y="27" width="3" height="3"/>
<rect x="7" y="6.5" width="3" height="3"/><rect x="20.2" y="6.5" width="3" height="3"/><rect x="7" y="19.8" width="3" height="3"/></g>
<path d="M25.4 18.5 V31.5 M19 25 H32" stroke="#22a84a" stroke-width="4"/></g><g transform="translate(54,21)">
<path d="M0.7 27.7 L18.8 27.7 L24.6 22.3 L24.6 28.7 L18.8 33.7 L0.7 33.7Z" fill="#bdbdbd"/>
<path d="M0.7 6.4 L6.5 0 L24.6 0 L18.8 6.4Z" fill="#8fcdf6"/>
<path d="M0.7 6.4 H18.8 V27.7 H0.7Z" fill="#6aaee3"/>
<path d="M18.8 6.4 L24.6 0 V22.3 L18.8 27.7Z" fill="#4b8fc7"/>
<path d="M28.5 25.5 V2.5" stroke="#333" stroke-width="1.2"/><path d="M26 5.5 L28.5 1 L31 5.5Z" fill="#333"/></g><g transform="translate(94,18)">
<path d="M33.2 10.7 Q19 1.5 6 9.5" fill="none" stroke="#333" stroke-width="1.1"/><path d="M3.7 11.5 L5.5 6.8 L9 10.5Z" fill="#333"/>
<path d="M3.3 17.2 Q18.9 5 35.3 16 L29.5 23.4 Q18.9 15.5 9.8 21.7Z" fill="#8fcdf6"/>
<path d="M9.8 21.7 Q18.9 15.5 29.5 23.4 L29.5 32 Q18.9 24 9.4 32.8Z" fill="#6aaee3"/>
<path d="M3.3 17.2 L9.8 21.7 L9.4 32.8 L3.3 26.3Z" fill="#4b8fc7"/>
<path d="M30 23.4 L35.3 17.6 V26.3 L30 32Z" fill="#fafafa" stroke="#555" stroke-width="0.9"/></g><g transform="translate(94,18)">
<path d="M47.2 11.5 L55 3.7 H78.8 L71 11.5Z" fill="#ececec" stroke="#777" stroke-width="0.9"/>
<path d="M71 11.5 L78.8 3.7 V27.9 L71 35.7Z" fill="#c4c4c4" stroke="#777" stroke-width="0.9"/>
<path d="M47.2 11.5 H71 V35.7 H47.2Z" fill="#dcdcdc" stroke="#777" stroke-width="0.9"/>
<circle cx="59" cy="23.8" r="8.3" fill="#fafafa" stroke="#666" stroke-width="0.9"/>
<circle cx="59" cy="23.8" r="7.3" fill="#6aaee3"/><circle cx="63.6" cy="19.2" r="5.6" fill="#fafafa"/><circle cx="59" cy="23.8" r="8.3" fill="none" stroke="#666" stroke-width="0.9"/></g><g transform="translate(184,23)">
<path d="M4 1.5 H24 M3.5 4 V23 M4 24 H24" stroke="#777" stroke-width="1.2"/>
<rect x="0.5" y="-1" width="5" height="5" fill="#fff" stroke="#666" stroke-width="1"/>
<rect x="23" y="-1" width="6" height="6" fill="#6aaee3"/><rect x="0.5" y="21" width="6" height="6" fill="#6aaee3"/><rect x="23" y="21" width="6" height="6" fill="#6aaee3"/></g><g transform="translate(240,21)">
<path d="M0.5 5 L4 1 H8 V32.5 H0.5Z" fill="#e8e8e8" stroke="#666" stroke-width="1"/>
<path d="M7.5 5 L12 1 H20.5 L16 5Z" fill="#8fcdf6"/><path d="M7.5 5 H16 V32.5 H7.5Z" fill="#6aaee3"/>
<path d="M16 5 L20.5 1 V28 L16 32.5Z" fill="#4b8fc7"/>
<path d="M18 18 H25" stroke="#333" stroke-width="1.4"/><path d="M24 15.5 L28.5 18 L24 20.5Z" fill="#333"/></g><g transform="translate(283,21)">
<path d="M0.5 7 L7 0.5 H32 L25.5 7Z" fill="#e8e8e8" stroke="#666" stroke-width="1"/>
<path d="M25.5 7 L32 0.5 V26 L25.5 32.5Z" fill="#bdbdbd" stroke="#666" stroke-width="1"/>
<path d="M0.5 7 H25.5 V32.5 H0.5Z" fill="#e6e6e6" stroke="#666" stroke-width="1"/>
<path d="M4 11.5 H11.5 V20.5 H23 V28.5 H4Z" fill="#6aaee3"/><path d="M4 11.5 H11.5 V20.5 H23 V28.5 H4Z" fill="none"/>
<path d="M4 11.5 V28.5 H23 V20.5 H11.5 V11.5Z" fill="#6aaee3"/><path d="M11.5 20.5 H23 V28.5 H4Z" fill="#8fcdf6"/><path d="M4 11.5 H11.5 V20.5 L4 28.5Z" fill="#4b8fc7"/></g><g transform="translate(326,21)">
<path d="M0 12 L3.5 9.5 H14 L14 4 L18.5 0.5 H32.5 L28 4 V21.5 H22 V29 L18.5 33 H0Z" fill="#6aaee3"/>
<path d="M14 4 L18.5 0.5 H32.5 L28 4Z M0 12 L3.5 9.5 H14 V12Z" fill="#8fcdf6"/>
<path d="M28 4 L32.5 0.5 V18 L28 21.5Z M22 21.5 L25 19 V26 L22 29Z" fill="#4b8fc7"/></g><g transform="translate(371,21)">
<path d="M1 6 L6 0.5 H32 L27 6Z" fill="#8fcdf6"/><path d="M1 6 H27 V18.5 H1Z" fill="#6aaee3"/><path d="M27 6 L32 0.5 V13 L27 18.5Z" fill="#4b8fc7"/>
<path d="M-1 22 H27 L34 15" fill="none" stroke="#6aaee3" stroke-width="1.6"/>
<path d="M1 24.5 H27 V32.5 H1Z" fill="#dedede" stroke="#666" stroke-width="1"/><path d="M27 24.5 L32 20 V28 L27 32.5Z" fill="#bdbdbd" stroke="#666" stroke-width="1"/></g><g>
<path d="M429.7 30.8 L435.8 25.5 H455.1 L449 30.8Z" fill="#efefef" stroke="#777" stroke-width="0.9"/>
<path d="M449 30.8 L455.1 25.5 V45.2 L449 51Z" fill="#bdbdbd" stroke="#777" stroke-width="0.9"/>
<path d="M429.7 30.8 H449 V51 H429.7Z" fill="#dedede" stroke="#777" stroke-width="0.9"/>
<path d="M425.3 25.8 H433 V21.3 L442.8 27.7 L433 34 V29.6 H425.3Z" fill="#1e88d8"/>
<g fill="none" stroke="#fafafa" stroke-width="4.2"><path d="M443.5 50.5 L447 47.5 M449.5 45 L453 42"/></g>
<g fill="none" stroke="#2a2a2a" stroke-width="2.2"><rect x="441.3" y="45.2" width="9.5" height="5.8" rx="2.9" transform="rotate(-40 446 48.1)"/><rect x="447.5" y="40" width="9.5" height="5.8" rx="2.9" transform="rotate(-40 452.2 42.9)"/></g></g><g>
<path d="M469.5 40.5 H482 V52.5 H469.5Z" fill="#dedede" stroke="#777" stroke-width="0.9"/>
<path d="M482 40.5 H494 V50 L491.5 52.5 H482Z" fill="#dedede" stroke="#777" stroke-width="0.9"/>
<path d="M482 40.5 L484.5 37.5 H496 L494 40.5Z" fill="#efefef" stroke="#777" stroke-width="0.8"/>
<path d="M494 40.5 L496 37.5 V47.5 L494 50Z" fill="#bdbdbd"/>
<path d="M469.2 28.5 L472.5 25.5 H485 L482 28.5Z" fill="#8fcdf6"/><path d="M469.2 28.5 H482 V40.5 H469.2Z" fill="#6aaee3"/><path d="M482 28.5 L485 25.5 V38 L482 40.5Z" fill="#4b8fc7"/>
<path d="M493 21 V37 M485 29 H501" stroke="#22a84a" stroke-width="3.3"/></g><g>
<rect x="512.3" y="40.5" width="15" height="11" fill="#f0f0f0" stroke="#6a6a6a" stroke-width="1"/>
<path d="M527.8 52 V23.8" stroke="#e05a5a" stroke-width="1.1"/><rect x="529.8" y="23.8" width="14" height="11.9" fill="#6aaee3"/></g><g>
<rect x="556.2" y="21.7" width="6.2" height="6" fill="#6aaee3"/>
<rect x="556.5" y="28" width="5.8" height="6" fill="#fff" stroke="#666" stroke-width="0.9"/><rect x="562.3" y="28" width="5.8" height="6" fill="#fff" stroke="#666" stroke-width="0.9"/>
<path d="M561.5 34 V51 M561.5 37.8 H569.4 M561.5 44 H569.4 M561.5 49.3 H569.4" stroke="#9a9a9a" stroke-width="0.9"/>
<rect x="571.5" y="29.8" width="17" height="23" fill="#fff" stroke="#666" stroke-width="1"/><rect x="571.5" y="29.8" width="17" height="3.2" fill="#555"/>
<path d="M571.5 37 H588.5 M571.5 41 H588.5 M571.5 45 H588.5 M571.5 49 H588.5 M575.5 33 V52.8" stroke="#888" stroke-width="0.8"/></g><g transform="translate(616,21)">
<path d="M1 8 L6 3 H22 V26 L17 31 H1Z" fill="#e4e4e4" stroke="#bbb" stroke-width="1"/>
<circle cx="26" cy="9" r="7.5" fill="#1e88d8"/><path d="M25 14 V8 L22.5 10 M25 6 L28 9.5" fill="none" stroke="#fff" stroke-width="1.6"/>
<path d="M17 23 H34 M17 29 H34 M24 20 V26 M28 26 V32" stroke="#888" stroke-width="1.2"/><path d="M22 22 V25" stroke="#1e88d8" stroke-width="1.2"/></g><g transform="translate(660,21)">
<rect x="0.5" y="2" width="27" height="26" fill="#eee" stroke="#aaa" stroke-width="1"/><rect x="0.5" y="2" width="27" height="3" fill="#bbb"/>
<path d="M0.5 11 H27 M0.5 17 H27 M0.5 23 H27 M8 5 V28 M15 5 V28" stroke="#aaa" stroke-width="1"/>
<circle cx="26" cy="9" r="7.5" fill="#1e88d8"/><path d="M25 14 V8 L22.5 10 M25 6 L28 9.5" fill="none" stroke="#fff" stroke-width="1.6"/>
<path d="M17 23 H34 M17 29 H34 M24 20 V26 M28 26 V32" stroke="#888" stroke-width="1.2"/></g><g transform="translate(749,21)">
<path d="M1 10 L8 3 L8 28 L1 33Z" fill="#e6e6e6" stroke="#555" stroke-width="1"/>
<path d="M5 6 L8 3 H10 L10 28 L5 33Z" fill="#e0e0e0"/>
<path d="M7.5 9 L17 2 V26 L7.5 33Z" fill="#5cbf6f" stroke="#555" stroke-width="0.8"/>
<path d="M22 9 L31 3 V26 L22 33Z" fill="#e5935a"/></g><g transform="translate(855,28)">
<path d="M1 2 V10 M30 2 V10 M2 6 H29" stroke="#444" stroke-width="1.2"/><path d="M1 6 L5 4 V8Z M30 6 L26 4 V8Z" fill="#444"/>
<rect x="0.5" y="11" width="29.5" height="6" fill="#f0a81c"/><path d="M3 11 V13 M6 11 V13 M9 11 V13 M12 11 V13 M15 11 V13 M18 11 V13 M21 11 V13 M24 11 V13 M27 11 V13" stroke="#a86a00" stroke-width="0.8"/></g><g transform="translate(934,21)">
<path d="M0.5 2 Q0.5 0 2.5 0 H23 Q25 0 25 2 V7 H0.5Z" fill="#6aaee3"/><path d="M0.5 5 H25 V7.5 H0.5Z" fill="#4b8fc7"/>
<path d="M6 7.5 H19 V31 L16 33 H9 L6 31Z" fill="#6aaee3"/><path d="M6 11 H19 M6 14 H19 M6 17 H19 M6 20 H19 M6 23 H19 M6 26 H19 M6 29 H19" stroke="#4b8fc7" stroke-width="1"/>
<path d="M23 19 V32 M16.5 25.5 H29.5" stroke="#22a84a" stroke-width="4"/></g><g transform="translate(977,22)">
<rect x="0" y="0" width="30" height="30" fill="#4d9fdc"/><rect x="1" y="1" width="28" height="17" fill="#8ccdf5"/>
<path d="M0 24 Q8 10 13 18 Q18 24 22 16 Q26 12 30 18 V30 H0Z" fill="#3b8bd0"/>
<circle cx="21" cy="8" r="3.2" fill="#f5f0c8"/></g></svg><div class="a" style="left:-1px;top:84px;width:180px;height:24.5px;background:#f3f3f3;border:1px solid #dcdcdc"></div><div class="a" style="left:158px;top:95px;width:8px;height:2px;background:#777"></div><div class="a" style="left:0;top:114.3px;width:149.8px;height:19.3px;background:#f0f0f0"></div><div class="a" style="left:0;top:114.3px;width:142.5px;height:19.3px"><span class="a it2" style="right:0;top:1px;font-weight:bold">sse télécommande Teddy...</span></div><div class="a" style="left:0;top:138.9px;width:118px;height:19.3px;background:#f0f0f0"></div><div class="a" style="left:0;top:138.9px;width:89px;height:19.3px"><span class="a it2" style="right:0;top:1px;font-weight:normal">etres du document</span></div><div class="a" style="left:0;top:163.3px;width:61.4px;height:19.3px;background:#f0f0f0"></div><div class="a" style="left:0;top:163.3px;width:40.3px;height:19.3px"><span class="a it2" style="right:0;top:1px;font-weight:normal">Nommées</span></div><div class="a" style="left:0;top:187.6px;width:42.2px;height:19.3px;background:#f0f0f0"></div><div class="a" style="left:0;top:187.6px;width:25px;height:19.3px"><span class="a it2" style="right:0;top:1px;font-weight:normal">Origine</span></div><div class="a" style="left:0;top:212px;width:30.1px;height:19.3px;background:#f0f0f0"></div><div class="a" style="left:0;top:212px;width:19px;height:19.3px"><span class="a it2" style="right:0;top:1px;font-weight:normal">Corps</span></div><div class="a" style="left:0;top:236.4px;width:54.5px;height:19.3px;background:#f0f0f0"></div><div class="a" style="left:0;top:236.4px;width:40px;height:19.3px"><span class="a it2" style="right:0;top:1px;font-weight:normal">Esquisses</span></div><div class="a" style="left:0;top:260.8px;width:72.3px;height:19.3px;background:#f0f0f0"></div><div class="a" style="left:0;top:260.8px;width:58.2px;height:19.3px"><span class="a it2" style="right:0;top:1px;font-weight:normal">Esquisse1</span></div><div class="a" style="left:151.5px;top:114.3px;width:23.5px;height:19.3px;background:#f1f1f1"></div><svg class="a" style="left:150px;top:115px" width="22" height="18"><circle cx="10.8" cy="9" r="6.2" fill="#e8e8e8" stroke="#777" stroke-width="1.2"/><circle cx="10.8" cy="9" r="2.6" fill="#333"/></svg><div class="a" style="left:-1px;top:612px;width:180px;height:25px;background:#f3f3f3;border:1px solid #dcdcdc"></div><svg class="a" style="left:0;top:600px" width="200" height="40"><path d="M161.5 19.5v9.5M156.7 24.3h9.5" stroke="#777" stroke-width="2"/></svg><div class="a" style="left:392px;top:612px;width:241px;height:24px;background:#f3f3f3"></div><svg class="a" style="left:0;top:0" width="1024" height="656"><ellipse cx="402.5" cy="625" rx="7.3" ry="3.5" fill="none" stroke="#333" stroke-width="1.4"/><path d="M402.5 616V633" stroke="#1e88d8" stroke-width="1.2" stroke-dasharray="3 1.5"/><path d="M406 619.5l3 2.2-3.5 1.2z" fill="#333"/><path d="M417 622h6l-3 4z" fill="#777"/><path d="M430.5 620.5H445V631.5H430.5Z" fill="#777"/><rect x="432" y="622.5" width="11.5" height="7.5" fill="#5aa8e6"/><path d="M431 620L436 616.5M437 620L443 617" stroke="#777" stroke-width="1.2"/><path d="M458 627 L456 622.5 Q455.5 621 457 621.5 L459.5 624.5 V617.5 Q460.5 616 461.5 617.5 V622 V616.5 Q462.5 615 463.5 616.5 V622 V617 Q464.5 615.5 465.5 617 V622.5 L467 619 Q468.3 618 468.5 619.5 L466.5 627 Q465 632.5 461 632.5 Q459 632.5 458 627Z" fill="#fafafa" stroke="#777" stroke-width="0.9"/><circle cx="487.5" cy="623.5" r="4.8" fill="#d9d9d9" stroke="#666" stroke-width="1.2"/><path d="M491 627l3.2 3.2" stroke="#8a5a20" stroke-width="1.6"/><path d="M496 617.5h4M498 615.5v4M496 621.5h4" stroke="#555" stroke-width="1"/><rect x="508.5" y="616.5" width="16" height="15" fill="none" stroke="#555" stroke-width="1" stroke-dasharray="2 1"/><circle cx="516" cy="623.5" r="6" fill="#d9d9d9" stroke="#555" stroke-width="1.2"/><path d="M521 628l3.5 3.5" stroke="#8a5a20" stroke-width="1.6"/><path d="M530 622h6l-3 4z" fill="#777"/><rect x="542" y="618.5" width="15.5" height="10.5" rx="1" fill="#c9c9c9" stroke="#777" stroke-width="1.4"/><path d="M549.5 629.5v1.5M545.5 631.5h8" stroke="#777" stroke-width="1.4"/><path d="M561 622h6l-3 4z" fill="#777"/><rect x="573.5" y="616.5" width="13" height="13" fill="#fff" stroke="#777" stroke-width="1.6"/><path d="M577.8 616.5v13M582.2 616.5v13M573.5 620.8h13M573.5 625.2h13" stroke="#777" stroke-width="1.6"/><path d="M593 622h6l-3 4z" fill="#777"/><rect x="605.5" y="617.5" width="15" height="13" fill="#e6e6e6" stroke="#777" stroke-width="1.5"/><path d="M613 617.5v13M605.5 624h15" stroke="#777" stroke-width="1.4"/><path d="M624.5 622h6l-3 4z" fill="#777"/></svg><div class="a" style="left:0;top:642px;width:1024px;height:14px;background:#f3f3f3"></div><div class="a" style="left:131px;top:652.7px;width:12px;height:4px;background:#333"></div></body></html>
